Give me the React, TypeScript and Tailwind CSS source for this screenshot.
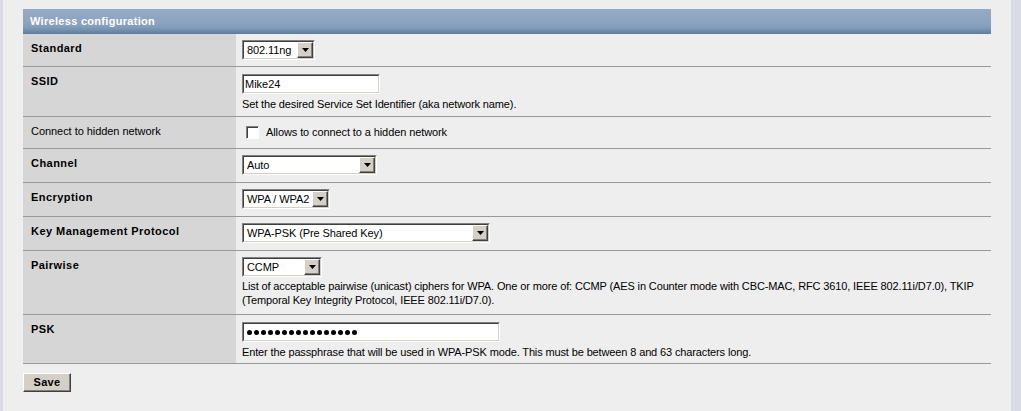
import React from 'react';

const FONT = { fontFamily: 'Tahoma, "Liberation Sans", Arial, sans-serif' };

const Arrow = () => (
  <div className="flex h-full w-[16px] shrink-0 items-center justify-center border border-t-white border-l-white border-r-[#404040] border-b-[#404040] bg-[#d4d0c8] shadow-[inset_-1px_-1px_#808080]">
    <svg width="7" height="4" viewBox="0 0 7 4">
      <polygon points="0,0 7,0 3.5,4" fill="#000" />
    </svg>
  </div>
);

const Sunken: React.FC<{ className: string; children: React.ReactNode }> = ({ className, children }) => (
  <div className={`flex border border-t-[#808080] border-l-[#808080] border-b-white border-r-white ${className}`}>
    <div className="flex flex-1 items-center border border-t-[#404040] border-l-[#404040] border-b-[#d4d0c8] border-r-[#d4d0c8] bg-white">
      {children}
    </div>
  </div>
);

const Select: React.FC<{ value: string; width: string }> = ({ value, width }) => (
  <Sunken className={`h-[20px] ${width}`}>
    <span className="flex-1 pl-[3px] text-[11px] leading-none tracking-[-0.1px] text-black">{value}</span>
    <Arrow />
  </Sunken>
);

const TextInput: React.FC<{ value: string; width: string; password?: boolean }> = ({ value, width, password }) => (
  <Sunken className={`h-[20px] ${width}`}>
    {password ? (
      <span className="flex flex-1 gap-[2px] pl-[3px]">
        {Array.from({ length: 16 }).map((_, i) => (
          <span key={i} className="h-[5px] w-[5px] rounded-full bg-black" />
        ))}
      </span>
    ) : (
      <span className="flex-1 pl-[1px] text-[11px] leading-none text-black">{value}</span>
    )}
  </Sunken>
);

const Desc: React.FC<{ children: React.ReactNode; className?: string }> = ({ children, className }) => (
  <p className={`text-[11px] leading-[14px] tracking-[-0.13px] text-black ${className ?? ''}`}>{children}</p>
);

interface RowProps {
  label: string;
  bold?: boolean;
  height: string;
  pad: string;
  children: React.ReactNode;
}

const Row: React.FC<RowProps> = ({ label, bold = true, height, pad, children }) => (
  <div className={`flex border-b border-[#999999] box-content ${height}`}>
    <div className="w-[213px] shrink-0 bg-[#d6d6d6] pl-[8px] pt-[7px]">
      <p
        className={`text-[11px] leading-[14px] text-black ${
          bold ? 'font-bold tracking-[0.45px]' : 'tracking-[-0.05px]'
        }`}
      >
        {label}
      </p>
    </div>
    <div className={`flex-1 bg-[#eeeeee] pl-[6px] ${pad}`}>{children}</div>
  </div>
);

export default function App() {
  return (
    <div className="flex h-[411px] w-[1021px] bg-[#eeeeee]" style={FONT}>
      <div className="w-[3px] shrink-0 bg-[#d9dde3]" />
      <div className="flex-1 px-[20px] pt-[9px]">
        <div className="flex h-[25px] items-center bg-[linear-gradient(to_bottom,#95abc5_0%,#8ca3be_55%,#819bb8_75%,#5c7c9c_100%)] pl-[7px]">
          <span className="text-[11px] font-bold tracking-[0.3px] text-white">Wireless configuration</span>
        </div>

        <Row label="Standard" height="h-[32px]" pad="pt-[6px]">
          <Select value="802.11ng" width="w-[73px]" />
        </Row>

        <Row label="SSID" height="h-[49px]" pad="pt-[7px]">
          <TextInput value="Mike24" width="w-[138px]" />
          <Desc className="mt-[3px]">Set the desired Service Set Identifier (aka network name).</Desc>
        </Row>

        <Row label="Connect to hidden network" bold={false} height="h-[31px]" pad="pt-[9px]">
          <label className="flex items-center">
            <span className="ml-[4px] h-[13px] w-[13px] border border-t-[#808080] border-l-[#808080] border-b-white border-r-white bg-white shadow-[inset_1px_1px_#404040]" />
            <span className="ml-[7px] text-[11px] leading-[13px] tracking-[-0.1px] text-black">Allows to connect to a hidden network</span>
          </label>
        </Row>

        <Row label="Channel" height="h-[33px]" pad="pt-[6px]">
          <Select value="Auto" width="w-[135px]" />
        </Row>

        <Row label="Encryption" height="h-[33px]" pad="pt-[6px]">
          <Select value="WPA / WPA2" width="w-[88px]" />
        </Row>

        <Row label="Key Management Protocol" height="h-[33px]" pad="pt-[6px]">
          <Select value="WPA-PSK (Pre Shared Key)" width="w-[248px]" />
        </Row>

        <Row label="Pairwise" height="h-[63px]" pad="pt-[6px]">
          <Select value="CCMP" width="w-[80px]" />
          <Desc className="mt-[2px]">
            List of acceptable pairwise (unicast) ciphers for WPA. One or more of: CCMP (AES in Counter mode with CBC-MAC, RFC 3610, IEEE 802.11i/D7.0), TKIP (Temporal Key Integrity Protocol, IEEE 802.11i/D7.0).
          </Desc>
        </Row>

        <Row label="PSK" height="h-[48px]" pad="pt-[7px]">
          <TextInput value="" password width="w-[258px]" />
          <Desc className="mt-[3px]">Enter the passphrase that will be used in WPA-PSK mode. This must be between 8 and 63 characters long.</Desc>
        </Row>

        <button className="mt-[9px] flex h-[19px] w-[48px] items-center justify-center border border-t-white border-l-white border-r-[#404040] border-b-[#404040] bg-[#d4d0c8] shadow-[inset_-1px_-1px_#808080] text-[11px] font-bold tracking-[0.3px] text-black">
          Save
        </button>
      </div>
      <div className="w-[10px] shrink-0 bg-[#d9dde3]" />
    </div>
  );
}
